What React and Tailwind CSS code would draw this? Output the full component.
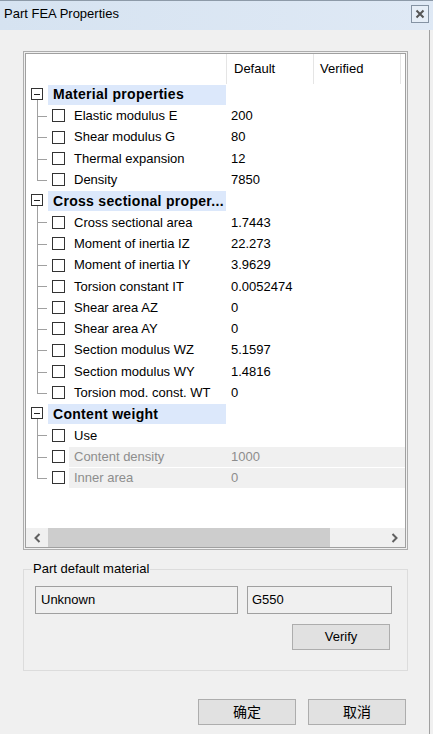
import React from "react";

const groups = [
  {
    title: "Material properties",
    items: [
      { label: "Elastic modulus E", value: "200" },
      { label: "Shear modulus G", value: "80" },
      { label: "Thermal expansion", value: "12" },
      { label: "Density", value: "7850" },
    ],
  },
  {
    title: "Cross sectional proper...",
    items: [
      { label: "Cross sectional area", value: "1.7443" },
      { label: "Moment of inertia IZ", value: "22.273" },
      { label: "Moment of inertia IY", value: "3.9629" },
      { label: "Torsion constant IT", value: "0.0052474" },
      { label: "Shear area AZ", value: "0" },
      { label: "Shear area AY", value: "0" },
      { label: "Section modulus WZ", value: "5.1597" },
      { label: "Section modulus WY", value: "1.4816" },
      { label: "Torsion mod. const. WT", value: "0" },
    ],
  },
  {
    title: "Content weight",
    items: [
      { label: "Use", value: "" },
      { label: "Content density", value: "1000", disabled: true },
      { label: "Inner area", value: "0", disabled: true },
    ],
  },
];

function Branch({ last }) {
  return (
    <div className="relative w-[22px] h-full shrink-0">
      <div
        className={
          last
            ? "absolute left-[11px] top-0 w-px h-1/2 bg-[#a0a0a0]"
            : "absolute left-[11px] top-0 w-px h-full bg-[#a0a0a0]"
        }
      />
      <div className="absolute left-[11px] top-1/2 w-[10px] h-px bg-[#a0a0a0]" />
    </div>
  );
}

function GroupRow({ title }) {
  return (
    <div className="flex items-center h-[21.3px]">
      <div className="relative w-[22px] h-full shrink-0">
        <div className="absolute left-[11px] top-[16px] bottom-0 w-px bg-[#a0a0a0]" />
        <div className="absolute left-[5px] top-[4px] w-[12px] h-[12px] border border-[#333] bg-white flex items-center justify-center">
          <div className="w-[6px] h-px bg-[#222]" />
        </div>
      </div>
      <div className="w-[178px] h-[20px] bg-[#dce8fb] pl-[5px] flex items-center font-bold text-[14px] tracking-[0.3px] whitespace-nowrap overflow-hidden">
        {title}
      </div>
    </div>
  );
}

function ItemRow({ item, last }) {
  return (
    <div className="flex items-center h-[21.3px]">
      <Branch last={last} />
      <div className="w-[4px] shrink-0" />
      <div className="w-[13px] h-[13px] border border-[#333] bg-white shrink-0" />
      <div
        className={
          item.disabled
            ? "ml-[4px] flex-1 h-[20px] flex items-center bg-[#f0f0f0] text-[#8d8d8d]"
            : "ml-[4px] flex-1 h-[20px] flex items-center text-black"
        }
      >
        <div className="w-[157px] pl-[5px] whitespace-nowrap">{item.label}</div>
        <div className="pl-[5px]">{item.value}</div>
      </div>
    </div>
  );
}

function Chevron({ dir }) {
  return (
    <svg width="7" height="10" viewBox="0 0 7 10">
      <path
        d={dir === "left" ? "M5.5 1 L1.5 5 L5.5 9" : "M1.5 1 L5.5 5 L1.5 9"}
        fill="none"
        stroke="#606060"
        strokeWidth="2"
      />
    </svg>
  );
}

function Button({ children, className }) {
  return (
    <button
      className={
        "h-[26px] w-[98px] border border-[#adadad] bg-[#e1e1e1] flex items-center justify-center " +
        (className || "")
      }
    >
      {children}
    </button>
  );
}

export default function App() {
  return (
    <div className="w-[433px] h-[734px] bg-[#f0f0f0] text-[13px] text-black font-['Liberation_Sans','Noto_Sans_CJK_SC',sans-serif] flex flex-col overflow-hidden">
      {/* title bar */}
      <div className="h-[30px] shrink-0 flex items-start justify-between bg-gradient-to-r from-[#d6e3f1] to-[#dfe9f5] border-t border-[#8d9aa8]">
        <span className="pl-[4px] pt-[3px]">Part FEA Properties</span>
        <div className="mt-[4px] mr-[4px] w-[18px] h-[18px] border border-[#8593a3] bg-[#e6eef7] flex items-center justify-center">
          <svg width="10" height="10" viewBox="0 0 10 10">
            <path d="M1.5 1.5 L8.5 8.5 M8.5 1.5 L1.5 8.5" stroke="#555" strokeWidth="2" />
          </svg>
        </div>
      </div>

      <div className="w-[430px] flex-1 border-r border-[#a0a0a0] flex flex-col">
        {/* property list */}
        <div className="mt-[21px] ml-[23px] w-[385px] h-[499px] border border-[#adadad] bg-[#f0f0f0] p-px">
          <div className="h-full border border-[#a0a0a0] bg-white flex flex-col">
            <div className="flex-1 overflow-hidden">
              <div className="flex h-[30px]">
                <div className="w-[200px]" />
                <div className="w-[87px] border-l border-[#e5e5e5] pl-[7px] flex items-center">
                  Default
                </div>
                <div className="w-[87px] border-l border-[#e5e5e5] pl-[6px] flex items-center">
                  Verified
                </div>
                <div className="border-l border-[#e5e5e5]" />
              </div>
              {groups.map((g) => (
                <div key={g.title}>
                  <GroupRow title={g.title} />
                  {g.items.map((it, i) => (
                    <ItemRow key={it.label} item={it} last={i === g.items.length - 1} />
                  ))}
                </div>
              ))}
            </div>
            {/* horizontal scrollbar */}
            <div className="h-[19px] bg-[#f0f0f0] flex items-center">
              <div className="w-[22px] flex justify-center">
                <Chevron dir="left" />
              </div>
              <div className="w-[282px] h-[19px] bg-[#cdcdcd]" />
              <div className="flex-1" />
              <div className="w-[22px] flex justify-center">
                <Chevron dir="right" />
              </div>
            </div>
          </div>
        </div>

        {/* default material group */}
        <fieldset className="mt-[12px] ml-[23px] w-[385px] h-[109px] border border-[#dcdcdc] px-[11px] pb-[20px]">
          <legend className="-ml-[3px] px-[1px] leading-[14px]">Part default material</legend>
          <div className="flex gap-[9px] mt-[10px]">
            <div className="w-[203px] h-[28px] border border-[#a0a0a0] bg-[#f0f0f0] pl-[5px] flex items-center">
              Unknown
            </div>
            <div className="w-[145px] h-[28px] border border-[#a0a0a0] bg-[#f0f0f0] pl-[4px] flex items-center">
              G550
            </div>
          </div>
          <div className="flex justify-end pr-[6px] mt-[10px]">
            <Button>Verify</Button>
          </div>
        </fieldset>

        {/* dialog buttons */}
        <div className="mt-[28px] flex justify-end gap-[12px] pr-[23px]">
          <Button className="text-[14px]">确定</Button>
          <Button className="text-[14px]">取消</Button>
        </div>
      </div>
    </div>
  );
}
